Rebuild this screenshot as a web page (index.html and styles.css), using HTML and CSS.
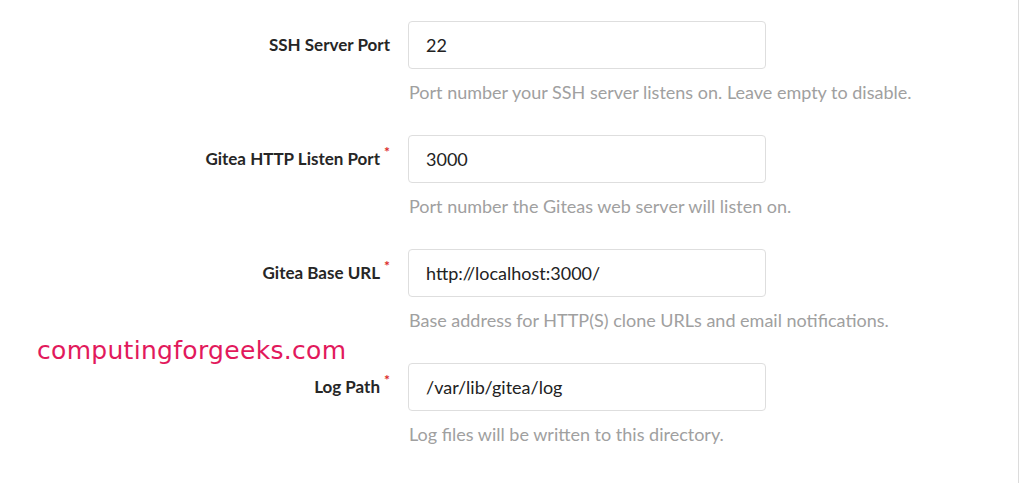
FILE: index.html
```html
<!DOCTYPE html>
<html>
<head>
<meta charset="utf-8">
<link rel="stylesheet" href="styles.css">
</head>
<body>
<div class="page">
  <form class="form">
    <div class="field">
      <div class="row">
        <label class="label">SSH Server Port</label>
        <div class="input">22</div>
      </div>
      <div class="help">Port number your SSH server listens on. Leave empty to disable.</div>
    </div>
    <div class="field">
      <div class="row">
        <label class="label required">Gitea HTTP Listen Port</label>
        <div class="input">3000</div>
      </div>
      <div class="help">Port number the Giteas web server will listen on.</div>
    </div>
    <div class="field">
      <div class="row">
        <label class="label required">Gitea Base URL</label>
        <div class="input">http://localhost:3000/</div>
      </div>
      <div class="help">Base address for HTTP(S) clone URLs and email notifications.</div>
    </div>
    <div class="field">
      <div class="row">
        <label class="label required">Log Path</label>
        <div class="input">/var/lib/gitea/log</div>
      </div>
      <div class="help">Log files will be written to this directory.</div>
    </div>
  </form>
  <div class="watermark">computingforgeeks.com</div>
</div>
</body>
</html>
```
FILE: styles.css
```css
html, body {
  margin: 0;
  padding: 0;
  background: #ffffff;
}
.page {
  position: relative;
  width: 1018px;
  height: 483px;
  border-right: 1px solid #dcdcdc;
  font-family: Lato, "Open Sans", sans-serif;
  font-kerning: normal;
}
.form {
  padding-top: 21px;
  display: flex;
  flex-direction: column;
  gap: 32px;
}
.row {
  display: flex;
  align-items: center;
  gap: 18px;
}
.label {
  width: 390px;
  text-align: right;
  font-weight: 700;
  font-size: 17px;
  color: #262626;
  position: relative;
  top: -1px;
}
.label.required::after {
  content: "*";
  color: #db2828;
  font-size: 14px;
  vertical-align: top;
  position: relative;
  top: -5px;
  margin-left: 4px;
}
.input {
  box-sizing: border-box;
  width: 358px;
  height: 48px;
  border: 1px solid #dedede;
  border-radius: 4px;
  padding: 0 17px;
  display: flex;
  align-items: center;
  font-size: 18px;
  color: #222;
}
.help {
  margin-top: 12px;
  margin-left: 409px;
  font-size: 18px;
  line-height: 22px;
  color: #a0a0a0;
}
.watermark {
  position: absolute;
  left: 37px;
  top: 336px;
  font-family: "DejaVu Sans", sans-serif;
  font-size: 25px;
  color: #e2195c;
  letter-spacing: 0.3px;
}
```
